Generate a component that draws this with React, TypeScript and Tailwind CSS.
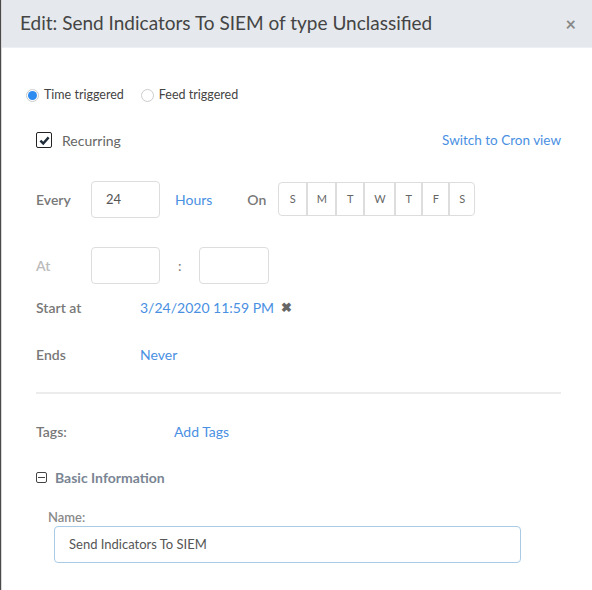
import { useState } from "react";

const days = [
  { d: "S", w: "w-[27px]" },
  { d: "M", w: "w-[29px]" },
  { d: "T", w: "w-[28px]" },
  { d: "W", w: "w-[31px]" },
  { d: "T", w: "w-[27px]" },
  { d: "F", w: "w-[27px]" },
  { d: "S", w: "w-[26px]" },
];

export default function App() {
  const [mode, setMode] = useState<"time" | "feed">("time");
  const [name, setName] = useState("Send Indicators To SIEM");

  return (
    <div className="h-[590px] w-[592px] overflow-hidden bg-white font-['Lato',sans-serif] text-[#555]">
      <div className="flex h-full border-l border-l-[#4a4a4a]">
        <div className="flex-1 border-l border-l-[#d8d8d8]">
          {/* header */}
          <div className="flex h-[48px] items-center justify-between border-b border-[#eef1f4] bg-[#e5e9ed] pl-[18px] pr-[16px]">
            <h1 className="text-[19px] text-[#444]">Edit: Send Indicators To SIEM of type Unclassified</h1>
            <button className="text-[18px] font-bold leading-none text-[#888]">×</button>
          </div>

          <div className="pl-[24px] pr-[24px] pt-[38px]">
            {/* trigger type */}
            <div className="flex items-center gap-[4px] text-[12.5px] text-[#444]">
              <label className="flex items-center gap-[5px]" onClick={() => setMode("time")}>
                <span className="flex h-[13px] w-[13px] items-center justify-center rounded-full border border-[#ccc]">
                  {mode === "time" && <span className="h-[9px] w-[9px] rounded-full bg-[#2e8cf0]" />}
                </span>
                Time triggered
              </label>
              <label className="ml-[13px] flex items-center gap-[5px]" onClick={() => setMode("feed")}>
                <span className="flex h-[13px] w-[13px] items-center justify-center rounded-full border border-[#ccc]">
                  {mode === "feed" && <span className="h-[9px] w-[9px] rounded-full bg-[#2e8cf0]" />}
                </span>
                Feed triggered
              </label>
            </div>

            <div className="pl-[10px] pr-[7px]">
              {/* recurring */}
              <div className="mt-[25px] flex items-center justify-between">
                <div className="flex items-center gap-[10px]">
                  <span className="flex h-[16px] w-[16px] items-center justify-center rounded-[2px] border-[1.5px] border-[#222]">
                    <svg viewBox="0 0 12 12" className="h-[11px] w-[11px]">
                      <path d="M1.5 6.2 L4.6 9.2 L10.5 2.6" fill="none" stroke="#1f2d3a" strokeWidth="2.6" />
                    </svg>
                  </span>
                  <span className="text-[14px] text-[#666]">Recurring</span>
                </div>
                <a className="text-[13.5px] text-[#4a90e2]">Switch to Cron view</a>
              </div>

              {/* every */}
              <div className="mt-[30px] flex items-center">
                <span className="w-[55px] text-[14px] font-semibold text-[#777]">Every</span>
                <input
                  defaultValue="24"
                  className="h-[37px] w-[69px] rounded-[4px] border border-[#ddd] px-[14px] text-[13px] text-[#555] outline-none"
                />
                <span className="ml-[15px] text-[14px] text-[#4a90e2]">Hours</span>
                <span className="ml-[35px] text-[14px] font-semibold text-[#777]">On</span>
                <div className="ml-[12px] flex h-[34px] rounded-[4px] border border-[#ddd]">
                  {days.map((x, i) => (
                    <button
                      key={i}
                      className={`${x.w} border-[#ddd] text-[11px] text-[#666] ${i > 0 ? "border-l-2" : ""}`}
                    >
                      {x.d}
                    </button>
                  ))}
                </div>
              </div>

              {/* at */}
              <div className="mt-[29px] flex items-center">
                <span className="w-[55px] text-[14px] font-semibold text-[#bbb]">At</span>
                <input className="h-[37px] w-[69px] rounded-[4px] border border-[#ddd] outline-none" />
                <span className="w-[39px] pl-[18px] text-[14px] text-[#777]">:</span>
                <input className="h-[37px] w-[70px] rounded-[4px] border border-[#ddd] outline-none" />
              </div>

              {/* start at */}
              <div className="mt-[14px] flex h-[20px] items-center">
                <span className="w-[104px] text-[14px] font-semibold text-[#777]">Start at</span>
                <span className="text-[14px] text-[#4a90e2]">3/24/2020 11:59 PM</span>
                <span className="ml-[7px] text-[13px] font-bold text-[#666]">✖</span>
              </div>

              {/* ends */}
              <div className="mt-[27px] flex h-[20px] items-center">
                <span className="w-[104px] text-[14px] font-semibold text-[#777]">Ends</span>
                <span className="text-[14px] text-[#4a90e2]">Never</span>
              </div>

              <div className="mt-[27px] h-[2px] bg-[#ececec]" />

              {/* tags */}
              <div className="mt-[28px] flex h-[20px] items-center">
                <span className="w-[138px] text-[14px] font-semibold text-[#777]">Tags:</span>
                <span className="text-[14px] text-[#4a90e2]">Add Tags</span>
              </div>

              {/* basic info */}
              <div className="mt-[26px] flex h-[20px] items-center gap-[8px]">
                <span className="flex h-[11px] w-[11px] items-center justify-center rounded-[2px] border border-[#444]">
                  <span className="h-px w-[7px] bg-[#444]" />
                </span>
                <span className="text-[14px] font-bold text-[#7a8594]">Basic Information</span>
              </div>

              <div className="mt-[21px]">
                <label className="ml-[12px] block text-[13px] font-semibold leading-[16px] text-[#8a8a8a]">Name:</label>
                <input
                  value={name}
                  onChange={(e) => setName(e.target.value)}
                  className="ml-[18px] mt-[1px] h-[37px] w-[467px] rounded-[4px] border border-[#a9cbe6] px-[14px] text-[13px] text-[#555] outline-none"
                />
              </div>
            </div>
          </div>
        </div>
      </div>
    </div>
  );
}
